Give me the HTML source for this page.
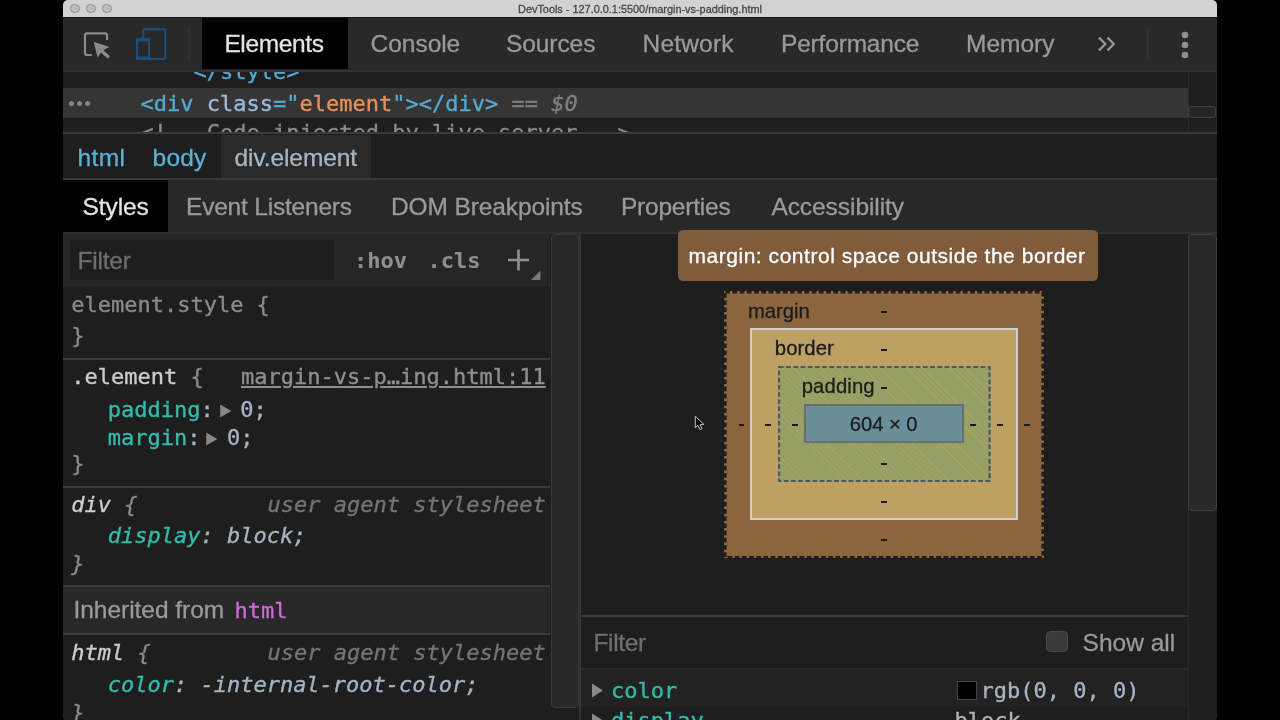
<!DOCTYPE html>
<html><head><meta charset="utf-8"><title>DevTools</title>
<style>
html,body{margin:0;padding:0;background:#000;}
body{width:1280px;height:720px;position:relative;overflow:hidden;font-family:"Liberation Sans",sans-serif;}
.a{position:absolute;white-space:nowrap;}
.s{font-family:"Liberation Sans",sans-serif;-webkit-text-stroke:0.3px;}
.m{font-family:"DejaVu Sans Mono","Liberation Mono",monospace;font-size:22px;line-height:28px;-webkit-text-stroke:0.35px;}
#win{will-change:transform;position:absolute;left:63px;top:0;width:1154px;height:720px;background:#242424;overflow:hidden;border-radius:5px 5px 4px 4px;}
.tab{font-size:24px;color:#9a9a9a;top:30px;line-height:28px;}
.tab2{font-size:24px;color:#9a9a9a;top:193px;line-height:28px;}
.hl{position:absolute;left:0;height:2px;}
i{font-style:italic;}
.tl{top:3.8px;width:7.6px;height:7.6px;border-radius:50%;background:#bebebe;border:1.2px solid #8e8e8e;}
.bx{font-size:20px;line-height:24px;color:#1c1c1c;-webkit-text-stroke:0.3px;}
.d{width:5.5px;height:2px;background:#1c1c1c;}
</style></head><body>
<div id="win">
<!-- title bar -->
<div class="a" style="left:0;top:0;width:1154px;height:17.3px;background:#d2d2d2;"></div>
<div class="a tl" style="left:7px;"></div>
<div class="a tl" style="left:23px;"></div>
<div class="a tl" style="left:39px;"></div>
<div class="a s" style="left:0;width:1154px;top:2.5px;text-align:center;font-size:10.9px;line-height:13px;color:#484848;">DevTools - 127.0.0.1:5500/margin-vs-padding.html</div>

<!-- toolbar -->
<div class="a" style="left:0;top:17.3px;width:1154px;height:52.2px;background:#292929;border-top:1.2px solid #1a1a1a;box-sizing:border-box;"></div>
<div class="a" style="left:0;top:69.5px;width:1154px;height:2px;background:#333;"></div>
<div class="a" style="left:139px;top:17.5px;width:146px;height:51.5px;background:#000;"></div>
<svg class="a" style="left:0;top:17px;" width="140" height="53" viewBox="63 17 140 53">
  <path d="M92 55 H87 a2 2 0 0 1 -2 -2 V35.3 a2 2 0 0 1 2 -2 H105 a2 2 0 0 1 2 2 V40" fill="none" stroke="#8a8a8a" stroke-width="2.2"/>
  <path d="M93.7 41.8 L109.5 47 L103.3 50.2 L110.2 56.2 L107.6 58.6 L100.8 52.4 L97.6 57.8 Z" fill="#8a8a8a"/>
  <rect x="143.3" y="29.2" width="22" height="29.8" rx="1.5" fill="none" stroke="#1b4f82" stroke-width="1.9"/>
  <rect x="137" y="39.8" width="12" height="18.6" rx="1" fill="#292929" stroke="#1b4f82" stroke-width="1.9"/>
  <rect x="136" y="38.2" width="14" height="3.4" fill="#1b4f82"/>
  <rect x="136" y="56.6" width="14" height="3.4" fill="#1b4f82"/>
  <rect x="188.3" y="28" width="1.2" height="31.5" fill="#363636"/>
</svg>
<div class="a s tab" id="t1" style="left:161.4px;color:#e4e4e4;font-size:24.5px;letter-spacing:-0.36px;">Elements</div>
<div class="a s tab" id="t2" style="left:307.6px;font-size:24.5px;letter-spacing:-0.04px;">Console</div>
<div class="a s tab" id="t3" style="left:443.0px;font-size:24.5px;letter-spacing:-0.08px;">Sources</div>
<div class="a s tab" id="t4" style="left:579.6px;font-size:24.5px;letter-spacing:0.17px;">Network</div>
<div class="a s tab" id="t5" style="left:718.0px;font-size:24.5px;letter-spacing:-0.18px;">Performance</div>
<div class="a s tab" id="t6" style="left:903px;font-size:24.5px;letter-spacing:0.0px;">Memory</div>
<svg class="a" style="left:1030px;top:17px;" width="124" height="53" viewBox="1093 17 124 53">
  <path d="M1099 37.5 L1105.3 44 L1099 50.5 M1107.5 37.5 L1113.8 44 L1107.5 50.5" fill="none" stroke="#9a9a9a" stroke-width="2.2"/>
  <rect x="1147" y="27.5" width="1.2" height="32.5" fill="#363636"/>
  <circle cx="1185" cy="35" r="3.3" fill="#8e8e8e"/>
  <circle cx="1185" cy="45" r="3.3" fill="#8e8e8e"/>
  <circle cx="1185" cy="55" r="3.3" fill="#8e8e8e"/>
</svg>

<!-- dom tree -->
<div class="a" style="left:0;top:71.5px;width:1154px;height:61px;background:#1e1e1e;overflow:hidden;">
  <div class="a" style="left:0;top:16px;width:1125px;height:30px;background:#353535;"></div>
  <div class="a m" style="left:130.5px;top:-13.5px;color:#55a9d1;">&lt;/style&gt;</div>
  <div class="a m" style="left:77.5px;top:18px;color:#55a9d1;">&lt;div <span style="color:#9bbbdc">class</span>="<span style="color:#e98f5c">element</span>"&gt;&lt;/div&gt;<span style="color:#808080"> == <i>$0</i></span></div>
  <div class="a m" style="left:77.5px;top:47.5px;color:#8a8a8a;">&lt;!-- Code injected by live-server --&gt;</div>
  <div class="a" style="left:5.7px;top:29px;width:5px;height:5px;border-radius:50%;background:#858585;box-shadow:8px 0 0 #858585,16px 0 0 #858585;"></div>
  <div class="a" style="left:1125px;top:0;width:29px;height:61px;background:#1e1e1e;border-left:1px solid #2b2b2b;border-right:1px solid #2b2b2b;box-sizing:border-box;"></div>
  <div class="a" style="left:1125.3px;top:34.5px;width:28.2px;height:12px;border:1px solid #454545;border-radius:3.5px;background:#262626;box-sizing:border-box;"></div>
</div>
<div class="a" style="left:0;top:132px;width:1154px;height:2.3px;background:#3b3b3b;"></div>

<!-- breadcrumbs -->
<div class="a" style="left:0;top:134.3px;width:1154px;height:43.7px;background:#1e1e1e;"></div>
<div class="a" style="left:157.5px;top:134.5px;width:150.5px;height:43.5px;background:#2a2a2a;"></div>
<div class="a s" id="b1" style="left:14.6px;top:144px;line-height:28px;color:#5db0d7;font-size:24.5px;letter-spacing:0.33px;">html</div>
<div class="a s" id="b2" style="left:89.6px;top:144px;line-height:28px;color:#5db0d7;font-size:24.5px;letter-spacing:0.17px;">body</div>
<div class="a s" id="b3" style="left:171.6px;top:144px;line-height:28px;color:#a8b5c2;font-size:24.5px;letter-spacing:-0.1px;">div.element</div>
<div class="a" style="left:0;top:178px;width:1154px;height:2px;background:#383838;"></div>

<!-- tabs 2 -->
<div class="a" style="left:0;top:180px;width:1154px;height:52.5px;background:#282828;"></div>
<div class="a" style="left:0;top:180px;width:105px;height:51.5px;background:#000;"></div>
<div class="a s tab2" id="u1" style="left:19.4px;color:#e4e4e4;font-size:24.5px;letter-spacing:-0.05px;">Styles</div>
<div class="a s tab2" id="u2" style="left:123px;font-size:24.5px;letter-spacing:-0.2px;">Event Listeners</div>
<div class="a s tab2" id="u3" style="left:328.0px;font-size:24.5px;letter-spacing:-0.11px;">DOM Breakpoints</div>
<div class="a s tab2" id="u4" style="left:558.0px;font-size:24.5px;letter-spacing:-0.22px;">Properties</div>
<div class="a s tab2" id="u5" style="left:708.4px;font-size:24.5px;letter-spacing:-0.06px;">Accessibility</div>
<div class="a" style="left:0;top:232px;width:1154px;height:2px;background:#303030;"></div>

<!-- left: styles pane -->
<div class="a" style="left:0;top:234px;width:487px;height:486px;background:#1e1e1e;"></div>
<div class="a" style="left:0;top:234px;width:487px;height:52px;background:#262626;"></div>
<div class="a" style="left:7px;top:240px;width:264px;height:39.5px;background:#1e1e1e;"></div>
<div class="a s" id="f1" style="left:14.5px;top:246.5px;line-height:28px;color:#6f6f6f;font-size:24.5px;letter-spacing:-0.2px;">Filter</div>
<div class="a m" style="left:291px;top:247px;font-weight:bold;-webkit-text-stroke:0.1px;color:#8f8f8f;">:hov</div>
<div class="a m" style="left:364.5px;top:247px;font-weight:bold;-webkit-text-stroke:0.1px;color:#8f8f8f;">.cls</div>
<svg class="a" style="left:440px;top:245px;" width="42" height="40" viewBox="503 245 42 40">
  <path d="M508 260 H529 M518.5 249.5 V270.5" stroke="#929292" stroke-width="2.6" fill="none"/>
  <path d="M540.5 270.5 V280 H531 Z" fill="#777"/>
</svg>

<div class="a m" style="left:8.2px;top:291px;color:#8a8a8a;">element.style {</div>
<div class="a m" style="left:8.2px;top:321.5px;color:#8a8a8a;">}</div>
<div class="a" style="left:0;top:358px;width:487px;height:2px;background:#3a3a3a;"></div>

<div class="a m" style="left:8.2px;top:363px;color:#cdcdcd;">.element <span style="color:#8a8a8a">{</span></div>
<div class="a m" style="left:178px;top:363px;color:#8f8f8f;text-decoration:underline;">margin-vs-p…ing.html:11</div>
<div class="a m" style="left:44.7px;top:395.5px;color:#30bdae;">padding<span style="color:#a5b4c3">:<svg width="26.5" height="14" viewBox="0 0 26.5 14" style="vertical-align:-1.5px"><path d="M6.2 0.6 L17.4 7 L6.2 13.4 Z" fill="#868686"/></svg>0;</span></div>
<div class="a m" style="left:44.7px;top:423.5px;color:#30bdae;">margin<span style="color:#a5b4c3">:<svg width="26.5" height="14" viewBox="0 0 26.5 14" style="vertical-align:-1.5px"><path d="M6.2 0.6 L17.4 7 L6.2 13.4 Z" fill="#868686"/></svg>0;</span></div>
<div class="a m" style="left:8.2px;top:449.5px;color:#8a8a8a;">}</div>
<div class="a" style="left:0;top:485.5px;width:487px;height:2px;background:#3a3a3a;"></div>

<div class="a m" style="left:8.2px;top:490.5px;color:#cdcdcd;"><i>div <span style="color:#8a8a8a">{</span></i></div>
<div class="a m" style="left:204.5px;top:490.5px;color:#747474;"><i>user agent stylesheet</i></div>
<div class="a m" style="left:44.7px;top:521.5px;color:#30bdae;"><i>display<span style="color:#a5b4c3">: block;</span></i></div>
<div class="a m" style="left:8.2px;top:549.5px;color:#8a8a8a;"><i>}</i></div>
<div class="a" style="left:0;top:585px;width:487px;height:2px;background:#3a3a3a;"></div>

<div class="a" style="left:0;top:587px;width:487px;height:46.5px;background:#282828;"></div>
<div class="a s" id="inh" style="left:10.5px;top:595.5px;line-height:28px;color:#9a9a9a;font-size:24.5px;letter-spacing:-0.04px;">Inherited from</div>
<div class="a m" style="left:171.5px;top:596.5px;color:#d268d6;">html</div>
<div class="a" style="left:0;top:633px;width:487px;height:2px;background:#3a3a3a;"></div>

<div class="a m" style="left:8.2px;top:639px;color:#cdcdcd;"><i>html <span style="color:#8a8a8a">{</span></i></div>
<div class="a m" style="left:204.5px;top:639px;color:#747474;"><i>user agent stylesheet</i></div>
<div class="a m" style="left:44.7px;top:671px;color:#30bdae;"><i>color<span style="color:#a5b4c3">: -internal-root-color;</span></i></div>
<div class="a m" style="left:8.2px;top:699px;color:#8a8a8a;"><i>}</i></div>

<!-- middle scrollbar -->
<div class="a" style="left:487px;top:234px;width:30px;height:486px;background:#1e1e1e;"></div>
<div class="a" style="left:487.5px;top:234px;width:28px;height:473.5px;background:#282828;border:1px solid #3a3a3a;border-radius:4px;box-sizing:border-box;"></div>
<div class="a" style="left:515.5px;top:234px;width:2px;height:486px;background:#343434;"></div>

<!-- right pane -->
<div class="a" style="left:517.5px;top:234px;width:636.5px;height:486px;background:#1e1e1e;"></div>
<!-- right scrollbar -->
<div class="a" style="left:1125px;top:234px;width:29px;height:486px;background:#1f1f1f;border-left:1px solid #2a2a2a;box-sizing:border-box;"></div>
<div class="a" style="left:1125px;top:234px;width:28.5px;height:277px;background:#282828;border:1px solid #404040;border-radius:4px;box-sizing:border-box;"></div>

<!-- tooltip -->
<div class="a" style="left:615px;top:230px;width:420px;height:50.5px;background:#805c3c;border-radius:5px;"></div>
<div class="a s" id="tip" style="left:625.5px;top:243px;line-height:26px;color:#fff;font-size:21px;letter-spacing:0.53px;">margin: control space outside the border</div>

<!-- box model -->
<div class="a" style="left:661px;top:290.5px;width:320px;height:267.5px;background:#8b653d;"></div>
<svg class="a" style="left:661px;top:290.5px;" width="320" height="268"><rect x="1.3" y="1.3" width="317.4" height="264.9" fill="none" stroke="#1e1e1e" stroke-width="2.6" stroke-dasharray="4.7 2.5"/></svg>
<div class="a" style="left:687px;top:328px;width:268px;height:192px;background:#bea065;border:2.4px solid #cfcfcf;box-sizing:border-box;"></div>
<div class="a" style="left:715px;top:366px;width:212.5px;height:116px;background:repeating-linear-gradient(45deg,#96a064 0 13px,rgba(150,160,100,0) 13px 31px),repeating-linear-gradient(45deg,rgba(200,172,104,.28) 0 0.9px,rgba(200,172,104,0) 0.9px 3.8px),#96a064;"></div>
<svg class="a" style="left:715px;top:366px;" width="213" height="116"><rect x="1" y="1" width="210.5" height="114" fill="none" stroke="#4c5664" stroke-width="2.2" stroke-dasharray="4.6 2.6"/></svg>
<div class="a" style="left:741px;top:404.2px;width:160px;height:39.2px;background:#6b8e9b;border:2px solid #6c6c6c;box-sizing:border-box;"></div>
<div class="a s bx" id="x1" style="left:684.9px;top:299px;font-size:20.3px;letter-spacing:-0.04px;">margin</div>
<div class="a s bx" id="x2" style="left:711.8px;top:336px;font-size:20.3px;letter-spacing:0.08px;">border</div>
<div class="a s bx" id="x3" style="left:738.7px;top:374px;font-size:20.3px;letter-spacing:0.13px;">padding</div>
<div class="a s bx" id="x4" style="left:786.7px;top:411.5px;font-size:20.3px;letter-spacing:-0.05px;">604 × 0</div>
<div class="a d" style="left:818px;top:310.5px;"></div>
<div class="a d" style="left:818px;top:348.5px;"></div>
<div class="a d" style="left:818px;top:386.5px;"></div>
<div class="a d" style="left:818px;top:462.5px;"></div>
<div class="a d" style="left:818px;top:500.5px;"></div>
<div class="a d" style="left:818px;top:538.5px;"></div>
<div class="a d" style="left:675.5px;top:424.3px;"></div>
<div class="a d" style="left:702px;top:424.3px;"></div>
<div class="a d" style="left:729.3px;top:424.3px;"></div>
<div class="a d" style="left:907px;top:424.3px;"></div>
<div class="a d" style="left:934.2px;top:424.3px;"></div>
<div class="a d" style="left:961.2px;top:424.3px;"></div>

<!-- cursor -->
<svg class="a" style="left:630px;top:414px;" width="16" height="20" viewBox="0 0 16 20"><path d="M2.3 2.3 L2.3 13.8 L5 11.4 L6.9 15.6 L8.9 14.7 L7.2 10.6 L10.8 10.3 Z" fill="#000" stroke="#d8d8d8" stroke-width="0.9" stroke-linejoin="miter"/></svg>

<!-- computed -->
<div class="a" style="left:517.5px;top:614.5px;width:607.5px;height:2px;background:#3c3c3c;"></div>
<div class="a s" id="f2" style="left:530.5px;top:629px;line-height:28px;color:#6f6f6f;font-size:24.5px;letter-spacing:-0.35px;">Filter</div>
<div class="a" style="left:983px;top:630.5px;width:22px;height:21.5px;background:#3a3a3a;border:1.5px solid #4c4c4c;border-radius:4.5px;box-sizing:border-box;"></div>
<div class="a s" id="sha" style="left:1019.6px;top:629px;line-height:28px;color:#9a9a9a;font-size:24.5px;letter-spacing:0.0px;">Show all</div>
<div class="a" style="left:517.5px;top:668px;width:607.5px;height:1.5px;background:#2a2a2a;"></div>
<div class="a" style="left:517.5px;top:669.5px;width:607.5px;height:37px;background:#222;"></div>
<svg class="a" style="left:528px;top:682px;" width="14" height="18"><path d="M1 1.5 L12 8.5 L1 15.5 Z" fill="#8a8a8a"/></svg>
<svg class="a" style="left:528px;top:712px;" width="14" height="18"><path d="M1 1.5 L12 8.5 L1 15.5 Z" fill="#8a8a8a"/></svg>
<div class="a m" style="left:548px;top:676.5px;color:#30bdae;">color</div>
<div class="a m" style="left:548px;top:706.5px;color:#30bdae;">display</div>
<div class="a" style="left:894px;top:680.5px;width:19.5px;height:19px;background:#000;border:1.5px solid #444;box-sizing:border-box;"></div>
<div class="a m" style="left:917.5px;top:676.5px;color:#a5b4c3;">rgb(0, 0, 0)</div>
<div class="a m" style="left:891.5px;top:706.5px;color:#a5b4c3;">block</div>
</div>
</body></html>
